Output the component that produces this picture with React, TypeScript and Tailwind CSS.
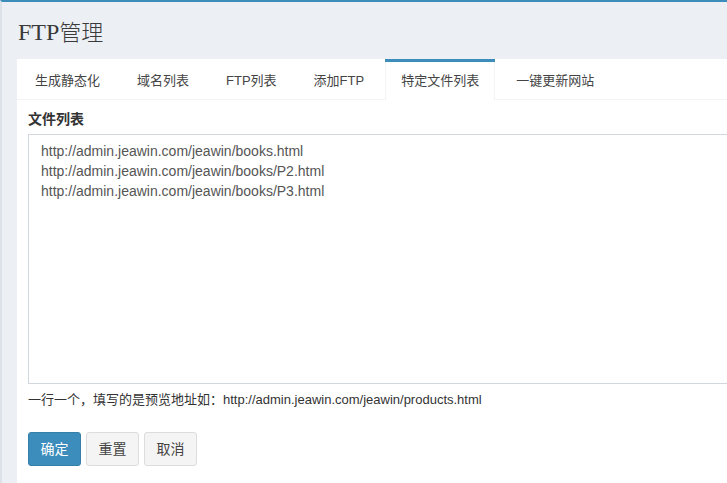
import React from 'react'

const tabs = ['生成静态化', '域名列表', 'FTP列表', '添加FTP', '特定文件列表', '一键更新网站']
const activeTab = '特定文件列表'

const urls = [
  'http://admin.jeawin.com/jeawin/books.html',
  'http://admin.jeawin.com/jeawin/books/P2.html',
  'http://admin.jeawin.com/jeawin/books/P3.html',
]

const sans = { fontFamily: '"Liberation Sans", "Noto Sans CJK SC", sans-serif' }

export default function App() {
  return (
    <div
      className="h-[483px] w-full overflow-hidden bg-[#ecf0f5] border-t-2 border-t-[#3c8dbc] border-l-2 border-l-[#dde2e8]"
      style={sans}
    >
      {/* Header */}
      <h1
        className="pl-[16px] pt-[17px] text-[24px] leading-[26px] text-[#3a3a3a] font-light"
        style={{ fontFamily: '"Liberation Serif", "Noto Sans CJK SC", serif' }}
      >
        FTP<span className="text-[22px]">管理</span>
      </h1>

      {/* Tabs box */}
      <div className="mt-[13px] ml-[15px] mr-[-40px] bg-white">
        <ul className="flex pl-[2px] border-b border-[#f4f4f4]">
          {tabs.map((t) => {
            const active = t === activeTab
            return (
              <li
                key={t}
                className={
                  active
                    ? 'mr-[5px] mb-[-1px] border-t-[3px] border-t-[#3c8dbc] bg-white'
                    : 'mr-[5px] mb-[-1px] border-t-[3px] border-t-transparent'
                }
              >
                <a
                  className={
                    active
                      ? 'block px-[15px] py-[10px] text-[13px] leading-[18px] text-[#444] border-x border-[#f4f4f4]'
                      : 'block px-[15px] py-[10px] text-[13px] leading-[18px] text-[#444] border-x border-transparent'
                  }
                >
                  {t}
                </a>
              </li>
            )
          })}
        </ul>

        {/* Tab content */}
        <div className="px-[11px] pt-[9px] pb-[20px]">
          <label className="block font-bold text-[14px] leading-[20px] text-[#333] mb-[5px]">文件列表</label>
          <textarea
            readOnly
            value={urls.join('\n')}
            className="block w-full h-[250px] resize-none border border-[#d2d6de] px-[12px] py-[6px] text-[14px] leading-[20px] text-[#555] outline-none"
            style={sans}
          />
          <p className="mt-[7px] text-[13px] leading-[18px] text-[#333]">
            一行一个，填写的是预览地址如：http://admin.jeawin.com/jeawin/products.html
          </p>

          <div className="mt-[23px] flex gap-[5px]">
            <button className="w-[53px] h-[34px] flex items-center justify-center text-[14px] rounded-[3px] border border-[#367fa9] bg-[#3c8dbc] text-white">
              确定
            </button>
            <button className="w-[53px] h-[34px] flex items-center justify-center text-[14px] rounded-[3px] border border-[#ddd] bg-[#f4f4f4] text-[#444]">
              重置
            </button>
            <button className="w-[53px] h-[34px] flex items-center justify-center text-[14px] rounded-[3px] border border-[#ddd] bg-[#f4f4f4] text-[#444]">
              取消
            </button>
          </div>
        </div>
      </div>
    </div>
  )
}
